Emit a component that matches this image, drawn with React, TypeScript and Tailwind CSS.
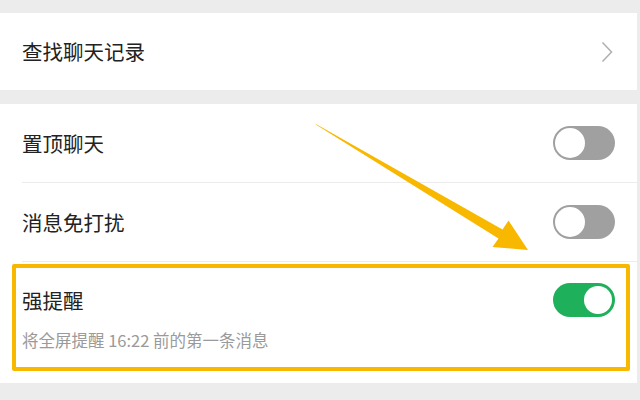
import type React from "react";

const font = { fontFamily: '"Noto Sans CJK SC", "Noto Sans", sans-serif' };

const Toggle: React.FC<{ on?: boolean }> = ({ on }) => (
	<div
		className={
			on
				? "relative w-[62px] h-[34px] rounded-full bg-[#1fb05c] shrink-0"
				: "relative w-[62px] h-[34px] rounded-full bg-[#a0a0a0] shrink-0"
		}
	>
		<div
			className={
				on
					? "absolute top-[3px] right-[3px] w-[28px] h-[28px] rounded-full bg-white"
					: "absolute top-[2px] left-[2px] w-[30px] h-[30px] rounded-full bg-white"
			}
		/>
	</div>
);

const App: React.FC = () => {
	return (
		<div
			className="relative w-[640px] h-[400px] overflow-hidden bg-[#ececec] pt-[13px] pr-[3px]"
			style={font}
		>
			{/* Search history */}
			<div className="h-[77px] bg-white flex items-center justify-between pl-[22px] pr-[24px]">
				<span className="text-[20.5px] leading-none text-[#222]">查找聊天记录</span>
				<svg width="12" height="22" viewBox="0 0 12 22" fill="none">
					<path d="M1.5 1.5 L10.5 11 L1.5 20.5" stroke="#b2b2b2" strokeWidth="1.6" />
				</svg>
			</div>

			{/* Chat settings */}
			<div className="mt-[14px] bg-white">
				<div className="ml-[22px] h-[79px] border-b border-[#ececec] flex items-center justify-between pr-[22px]">
					<span className="text-[20.5px] leading-none text-[#222]">置顶聊天</span>
					<Toggle />
				</div>
				<div className="ml-[22px] h-[79px] border-b border-[#ececec] flex items-center justify-between pr-[22px]">
					<span className="text-[20.5px] leading-none text-[#222]">消息免打扰</span>
					<Toggle />
				</div>
				<div className="pt-[2px] pb-[12px] pl-[12px] pr-[7px]">
					<div className="border-4 border-[#f8b800] rounded-[2px] pl-[6px] pr-[11px] pt-[15px] pb-[17px]">
						<div className="h-[34px] flex items-center justify-between">
							<span className="text-[20.5px] leading-none text-[#222]">强提醒</span>
							<Toggle on />
						</div>
						<div className="mt-[13px] text-[16.5px] leading-[20px] text-[#9a9a9a]">
							将全屏提醒 16:22 前的第一条消息
						</div>
					</div>
				</div>
			</div>

			{/* Annotation arrow */}
			<svg
				className="absolute left-0 top-0 pointer-events-none"
				width="640"
				height="400"
				viewBox="0 0 640 400"
			>
				<polygon
					points="315,123.5 316.5,125 498.5,238.5 492.5,247 528,250 508.5,220.5 502.5,229.5"
					fill="#f8b800"
				/>
			</svg>
		</div>
	);
};

export default App;
